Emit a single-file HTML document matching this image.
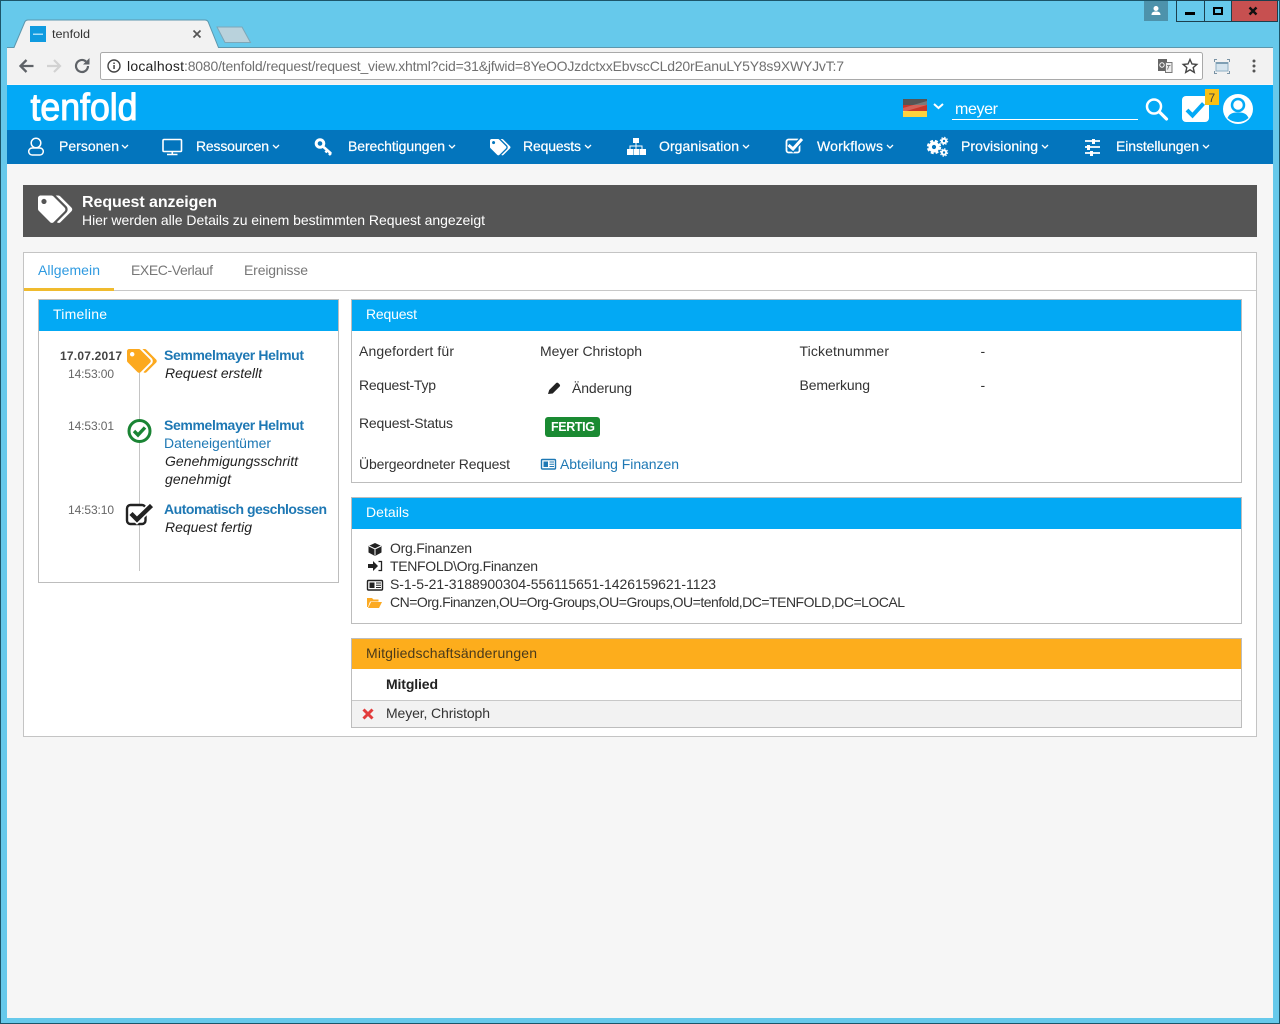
<!DOCTYPE html>
<html lang="de"><head><meta charset="utf-8"><title>tenfold</title>
<style>
html,body{margin:0;padding:0;width:1280px;height:1024px;overflow:hidden;background:#66c9eb}
svg{display:block}
text{font-family:"Liberation Sans",sans-serif;font-size:14px;fill:#333;white-space:pre}
.w{fill:#fff}.g{fill:#666}.b{fill:#1e78b4}.bb{fill:#1e78b4;font-weight:bold}.i{font-style:italic;fill:#222}.s{font-size:12px;fill:#666}
.n{fill:#fff;font-size:14px;stroke:#fff;stroke-width:.22}
.p{fill:#fff;stroke:#bdbdbd}
.ph{fill:#03a9f4}
</style></head><body>
<svg width="1280" height="1024" viewBox="0 0 1280 1024" xmlns="http://www.w3.org/2000/svg">
<defs>
<path id="tags" d="M497.941 225.941L286.059 14.059A48 48 0 0 0 252.118 0H48C21.49 0 0 21.49 0 48v204.118a48 48 0 0 0 14.059 33.941l211.882 211.882c18.744 18.745 49.136 18.746 67.882 0l204.118-204.118c18.745-18.745 18.745-49.137 0-67.882zM112 160c-26.51 0-48-21.49-48-48s21.49-48 48-48 48 21.49 48 48-21.49 48-48 48zm513.941 133.823L421.823 497.941c-18.745 18.745-49.137 18.745-67.882 0l-.36-.36L527.64 323.522c16.999-16.999 26.36-39.6 26.36-63.64s-9.362-46.641-26.36-63.64L331.397 0h48.721a48 48 0 0 1 33.941 14.059l211.882 211.882c18.745 18.745 18.745 49.137 0 67.882z"/>
</defs>
<!-- window frame -->
<rect width="1280" height="1024" fill="#66c9eb"/>
<rect x="0.500" y="0.500" width="1279" height="1023" fill="none" stroke="#1c5569"/>
<rect x="1144" y="1" width="24" height="20" fill="#4d92ab"/>
<path d="M1156 6a2.500 2.500 0 1 1 0 5 2.500 2.500 0 0 1 0-5zM1151.500 15c0-3 2-3.500 4.500-3.500s4.500.5 4.500 3.500z" fill="#fff"/>
<rect x="1176.500" y="0.500" width="28" height="21" fill="#66c9eb" stroke="#1c3f4d"/>
<rect x="1204.500" y="0.500" width="27" height="21" fill="#66c9eb" stroke="#1c3f4d"/>
<rect x="1231.500" y="0.500" width="46" height="21" fill="#c75050" stroke="#1c3f4d"/>
<rect x="1185" y="12" width="10" height="3" fill="#000"/>
<rect x="1214" y="8" width="8" height="6" fill="none" stroke="#000" stroke-width="2"/>
<path d="M1249.500 7.500l7 7M1256.500 7.500l-7 7" stroke="#111" stroke-width="2.400"/>
<!-- tabs -->
<path d="M7 48 H14 L25 22 Q26 20 28 20 H205 Q207 20 208 22 L219 48 H1273 V90 H7Z" fill="#f2f2f2"/>
<path d="M7 47.500 H14 L25 21.500 Q26 20 28 20 H205 Q207 20 208 21.500 L218.500 47.500 H1273" fill="none" stroke="#5c97ad"/>
<path d="M217 27 H242 L250.500 42.500 H225Z" fill="#b9d2dc" stroke="#7da7b8"/>
<rect x="30" y="26" width="16" height="16" fill="#0f9be0"/>
<rect x="33" y="33.500" width="10" height="1.500" fill="#a8def7"/>
<text x="52" y="38" textLength="38" lengthAdjust="spacingAndGlyphs" style="font-size:12px;fill:#333">tenfold</text>
<path d="M193.500 30.500l7 7M200.500 30.500l-7 7" stroke="#555" stroke-width="1.700"/>
<!-- toolbar -->
<path d="M33.500 66H20.500M26.500 60l-6 6 6 6" fill="none" stroke="#5f6368" stroke-width="2.300"/>
<path d="M47 66H60M54 60l6 6-6 6" fill="none" stroke="#d2d2d2" stroke-width="2.200"/>
<path d="M88 66a6 6 0 1 1-2-4.500" fill="none" stroke="#5f6368" stroke-width="2.200"/><path d="M89.500 58v6.500h-6.500z" fill="#5f6368"/>
<rect x="100.500" y="52.500" width="1102" height="27" rx="2" fill="#fff" stroke="#a9a9a9"/>
<circle cx="114" cy="66" r="6" fill="none" stroke="#444" stroke-width="1.400"/><rect x="113.300" y="65" width="1.500" height="4" fill="#444"/><rect x="113.300" y="62.500" width="1.500" height="1.500" fill="#444"/>
<text x="127" y="71" textLength="57" style="fill:#222">localhost</text>
<text x="184" y="71" textLength="660" style="fill:#707070">:8080/tenfold/request/request_view.xhtml?cid=31&amp;jfwid=8YeOOJzdctxxEbvscCLd20rEanuLY5Y8s9XWYJvT:7</text>
<rect x="1158" y="59" width="9" height="12" fill="#666"/><circle cx="1162" cy="65" r="2.200" fill="none" stroke="#fff"/>
<rect x="1165.500" y="62.500" width="6.500" height="10" fill="#eee" stroke="#777"/><path d="M1167 65.500h3.500M1169 65.500l-1.500 4" stroke="#666" stroke-width=".8"/>
<path d="M1190 59.500l2 4.500 4.800.4-3.600 3.200 1.100 4.800-4.300-2.600-4.300 2.600 1.100-4.800-3.600-3.200 4.800-.4z" fill="none" stroke="#444" stroke-width="1.400"/>
<rect x="1216" y="62.500" width="12" height="8.500" fill="#d5e4ee" stroke="#8eafc4"/><rect x="1216" y="62" width="12" height="2" fill="#7f9fb4"/>
<path d="M1214.500 62v-2.500h2.500M1229.500 62v-2.500h-2.500M1214.500 71v2.500h2.500M1229.500 71v2.500h-2.500" fill="none" stroke="#7a93a5"/>
<circle cx="1254" cy="61" r="1.500" fill="#555"/><circle cx="1254" cy="66" r="1.500" fill="#555"/><circle cx="1254" cy="71" r="1.500" fill="#555"/>
<!-- page bg -->
<rect x="7" y="84" width="1266" height="934" fill="#f6f6f6"/>
<!-- header -->
<rect x="7" y="85" width="1266" height="45" fill="#03a9f6"/>
<text x="30.500" y="120" textLength="107" lengthAdjust="spacingAndGlyphs" style="font-size:38px;fill:#fff;stroke:#fff;stroke-width:1.100;stroke-linejoin:round">tenfold</text>
<rect x="903" y="99" width="24" height="6" fill="#555"/><rect x="903" y="105" width="24" height="6" fill="#c8372a"/><rect x="903" y="111" width="24" height="6" fill="#fdd23e"/>
<path d="M903 108L927 101V105L903 112Z" fill="#fff" opacity=".22"/>
<path d="M934 104l4.500 4 4.500-4" fill="none" stroke="#fff" stroke-width="2"/>
<text x="955" y="114" textLength="43" class="w" style="font-size:16px">meyer</text>
<rect x="952" y="119" width="186" height="1" fill="#fff"/>
<circle cx="1154" cy="106.500" r="7" fill="none" stroke="#fff" stroke-width="2.500"/><path d="M1159.500 112l7 7" stroke="#fff" stroke-width="3.200" stroke-linecap="round"/>
<rect x="1182" y="96" width="27" height="26" rx="4" fill="#fff"/>
<path d="M1187 110l5.500 5.500 11-12" fill="none" stroke="#03a9f6" stroke-width="4"/>
<rect x="1205" y="89" width="14" height="16" fill="#f9c013"/>
<text x="1208.500" y="102" style="font-size:12px;fill:#444">7</text>
<circle cx="1238" cy="109" r="15" fill="#fff"/>
<circle cx="1238" cy="105" r="6" fill="none" stroke="#03a9f6" stroke-width="2.500"/>
<path d="M1227.500 118c2-5 6-5.500 10.500-5.500s8.500.5 10.500 5.500q-4.500 4-10.500 4t-10.500-4z" fill="#03a9f6"/>
<!-- nav -->
<rect x="7" y="130" width="1266" height="34" fill="#0375bd"/>
<text class="n" x="59" y="151" textLength="60">Personen</text>
<text class="n" x="196" y="151" textLength="73">Ressourcen</text>
<text class="n" x="348" y="151" textLength="97">Berechtigungen</text>
<text class="n" x="523" y="151" textLength="58">Requests</text>
<text class="n" x="659" y="151" textLength="80">Organisation</text>
<text class="n" x="817" y="151" textLength="66">Workflows</text>
<text class="n" x="961" y="151" textLength="77">Provisioning</text>
<text class="n" x="1116" y="151" textLength="83">Einstellungen</text>
<g fill="none" stroke="#fff" stroke-width="1.300">
<path d="M122 145l3 3 3-3M273 145l3 3 3-3M449 145l3 3 3-3M585 145l3 3 3-3M743 145l3 3 3-3M887 145l3 3 3-3M1042 145l3 3 3-3M1203 145l3 3 3-3"/>
</g>
<!-- nav icons -->
<circle cx="36" cy="143" r="4.800" fill="none" stroke="#fff" stroke-width="1.500"/>
<rect x="28.700" y="148" width="14.600" height="7" rx="3.500" fill="none" stroke="#fff" stroke-width="1.500"/>
<rect x="163" y="139.500" width="18.500" height="12" rx="1" fill="none" stroke="#fff" stroke-width="1.600"/><path d="M167 154.500h10.500M172.300 152v2" stroke="#fff" stroke-width="1.600"/>
<circle cx="320" cy="143.500" r="3.800" fill="none" stroke="#fff" stroke-width="3"/><path d="M323 146.500l8 7M327.500 150l-2 2.500M331 153l-2 2" stroke="#fff" stroke-width="2.600"/>
<use href="#tags" transform="translate(490 139) scale(.032)" fill="#fff"/>
<g fill="#fff"><rect x="633" y="138" width="6" height="5"/><rect x="635.500" y="143" width="1" height="3"/><rect x="629.500" y="145.500" width="13" height="1"/><rect x="629.500" y="146" width="1" height="3"/><rect x="635.500" y="146" width="1" height="3"/><rect x="641.500" y="146" width="1" height="3"/><rect x="627" y="149" width="6" height="6"/><rect x="633.500" y="149" width="6" height="6"/><rect x="640" y="149" width="6" height="6"/></g>
<rect x="786.500" y="139.500" width="13" height="13" rx="2" fill="none" stroke="#fff" stroke-width="1.800"/>
<path d="M788.500 145l4.500 4 9-10" fill="none" stroke="#0375bd" stroke-width="5.500"/><path d="M788.500 145l4.500 4 9-10" fill="none" stroke="#fff" stroke-width="3"/>
<circle cx="934" cy="147" r="3.800" fill="none" stroke="#fff" stroke-width="3.400"/><circle cx="934" cy="147" r="6.200" fill="none" stroke="#fff" stroke-width="2" stroke-dasharray="3 2"/>
<circle cx="944" cy="141" r="2.200" fill="none" stroke="#fff" stroke-width="2"/><circle cx="944" cy="141" r="3.700" fill="none" stroke="#fff" stroke-width="1" stroke-dasharray="1.500 1.400"/>
<circle cx="944" cy="152.500" r="2.200" fill="none" stroke="#fff" stroke-width="2"/><circle cx="944" cy="152.500" r="3.700" fill="none" stroke="#fff" stroke-width="1" stroke-dasharray="1.500 1.400"/>
<path d="M1085 141h15M1085 147h15M1085 153h15" stroke="#fff" stroke-width="1.800"/><rect x="1092" y="139" width="3" height="5" fill="#fff"/><rect x="1087" y="145" width="3" height="5" fill="#fff"/><rect x="1090" y="151" width="3" height="5" fill="#fff"/>
<!-- title band -->
<rect x="23" y="185" width="1234" height="52" fill="#555"/>
<use href="#tags" transform="translate(38 195.500) scale(.0535)" fill="#fff"/>
<text x="82" y="207" textLength="135" class="w" style="font-size:16px;font-weight:bold">Request anzeigen</text>
<text x="82" y="225" textLength="403" class="w">Hier werden alle Details zu einem bestimmten Request angezeigt</text>
<!-- tab box -->
<rect x="23.500" y="252.500" width="1233" height="484" fill="#fff" stroke="#c4c4c4"/>
<rect x="24" y="290" width="1232" height="1" fill="#c8c8c8"/>
<rect x="24" y="288" width="90" height="3" fill="#f0bb2e"/>
<text x="38" y="275" textLength="62" style="fill:#2f9ae0">Allgemein</text>
<text x="131" y="275" textLength="82" style="fill:#777">EXEC-Verlauf</text>
<text x="244" y="275" textLength="64" style="fill:#777">Ereignisse</text>
<!-- timeline -->
<rect class="p" x="38.500" y="299.500" width="300" height="283"/>
<rect class="ph" x="39" y="300" width="299" height="31"/>
<text x="53" y="319" textLength="54" class="w">Timeline</text>
<rect x="139" y="370" width="1" height="201" fill="#c4c4c4"/>
<text x="60" y="360" textLength="62" style="font-size:12px;font-weight:bold;fill:#444">17.07.2017</text>
<text x="68" y="378" textLength="46" class="s">14:53:00</text>
<text x="68" y="430" textLength="46" class="s">14:53:01</text>
<text x="68" y="514" textLength="46" class="s">14:53:10</text>
<use href="#tags" transform="translate(127 349) scale(.0465)" fill="#fca91f"/>
<circle cx="139.500" cy="431" r="10.500" fill="#fff" stroke="#1a8434" stroke-width="3"/>
<path d="M134 431l4 4 7-7.500" fill="none" stroke="#1a8434" stroke-width="3.400"/>
<rect x="127" y="505" width="18.500" height="19" rx="3.500" fill="#fff" stroke="#222" stroke-width="2.400"/>
<path d="M131 513.500l6 6 14.500-14" fill="none" stroke="#fff" stroke-width="7.500"/>
<path d="M131 513.500l6 6 14.500-14" fill="none" stroke="#222" stroke-width="4.400"/>
<text x="164" y="360" textLength="140" class="bb">Semmelmayer Helmut</text>
<text x="165" y="378" textLength="97" class="i">Request erstellt</text>
<text x="164" y="430" textLength="140" class="bb">Semmelmayer Helmut</text>
<text x="164" y="448" textLength="107" class="b">Dateneigentümer</text>
<text x="165" y="466" textLength="133" class="i">Genehmigungsschritt</text>
<text x="165" y="484" textLength="66" class="i">genehmigt</text>
<text x="164" y="514" textLength="163" class="bb">Automatisch geschlossen</text>
<text x="165" y="532" textLength="87" class="i">Request fertig</text>
<!-- request -->
<rect class="p" x="351.500" y="299.500" width="890" height="183"/>
<rect class="ph" x="352" y="300" width="889" height="31"/>
<text x="366" y="319" textLength="51" class="w">Request</text>
<text x="359" y="356" textLength="95">Angefordert für</text>
<text x="540" y="356" textLength="102">Meyer Christoph</text>
<text x="799.500" y="356" textLength="89.500">Ticketnummer</text>
<text x="980.500" y="356">-</text>
<text x="359" y="390" textLength="77">Request-Typ</text>
<path d="M548 394l1.200-4 7-7q1-.8 2 0l1.500 1.500q.8 1 0 2l-7 7z" fill="#222"/>
<text x="572" y="393" textLength="60">Änderung</text>
<text x="799.500" y="390" textLength="70.500">Bemerkung</text>
<text x="980.500" y="390">-</text>
<text x="359" y="428" textLength="94">Request-Status</text>
<rect x="545" y="417" width="55" height="20" rx="3" fill="#1a8a32"/>
<text x="551" y="431" textLength="44" class="w" style="font-size:12.500px;font-weight:bold">FERTIG</text>
<text x="359" y="469" textLength="151">Übergeordneter Request</text>
<rect x="541.500" y="459.500" width="14" height="9.500" rx="1" fill="none" stroke="#1e78b4" stroke-width="1.400"/>
<rect x="543.500" y="461.500" width="4.500" height="5.500" fill="#1e78b4"/><path d="M549.500 462h4.500M549.500 464.300h4.500M549.500 466.500h4.500" stroke="#1e78b4"/>
<text x="560" y="469" textLength="119" class="b">Abteilung Finanzen</text>
<!-- details -->
<rect class="p" x="351.500" y="497.500" width="890" height="126"/>
<rect class="ph" x="352" y="498" width="889" height="31"/>
<text x="366" y="517" textLength="43" class="w">Details</text>
<path d="M375 543l6.500 3v6.500l-6.500 3.500-6.500-3.500V546z" fill="#222"/><path d="M369 546l6 3 6-3" fill="none" stroke="#fff"/><path d="M375 549v6.500" stroke="#fff"/>
<text x="390" y="553" textLength="82">Org.Finanzen</text>
<path d="M368 564h5v-3l5 5-5 5v-3h-5z" fill="#222"/><path d="M378.500 561.500h3v9h-3" fill="none" stroke="#222" stroke-width="1.300"/>
<text x="390" y="571" textLength="148">TENFOLD\Org.Finanzen</text>
<rect x="367.500" y="580.500" width="15" height="9.500" rx="1" fill="none" stroke="#222" stroke-width="1.400"/>
<rect x="369.500" y="582.500" width="5" height="5.500" fill="#222"/><path d="M376 583h5M376 585.300h5M376 587.500h5" stroke="#222"/>
<text x="390" y="589" textLength="326">S-1-5-21-3188900304-556115651-1426159621-1123</text>
<path d="M367 607v-9h5l1.500 1.500h5v2h-8.500l-2 5.500zM368 608l3-6h11l-3 6z" fill="#fcaa22"/>
<text x="390" y="607" textLength="515">CN=Org.Finanzen,OU=Org-Groups,OU=Groups,OU=tenfold,DC=TENFOLD,DC=LOCAL</text>
<!-- members -->
<rect class="p" x="351.500" y="638.500" width="890" height="89"/>
<rect x="352" y="639" width="889" height="30" fill="#fdad1c"/>
<text x="366" y="658" textLength="171" style="fill:#4a3a1a">Mitgliedschaftsänderungen</text>
<text x="386" y="689" textLength="52" style="font-weight:bold;fill:#222">Mitglied</text>
<rect x="352" y="700" width="889" height="1" fill="#c8c8c8"/>
<rect x="352" y="701" width="889" height="26" fill="#f2f2f2"/>
<path d="M363.500 709.500l9 9M372.500 709.500l-9 9" stroke="#e23c3c" stroke-width="3"/>
<text x="386" y="718" textLength="104">Meyer, Christoph</text>
</svg>
</body></html>
